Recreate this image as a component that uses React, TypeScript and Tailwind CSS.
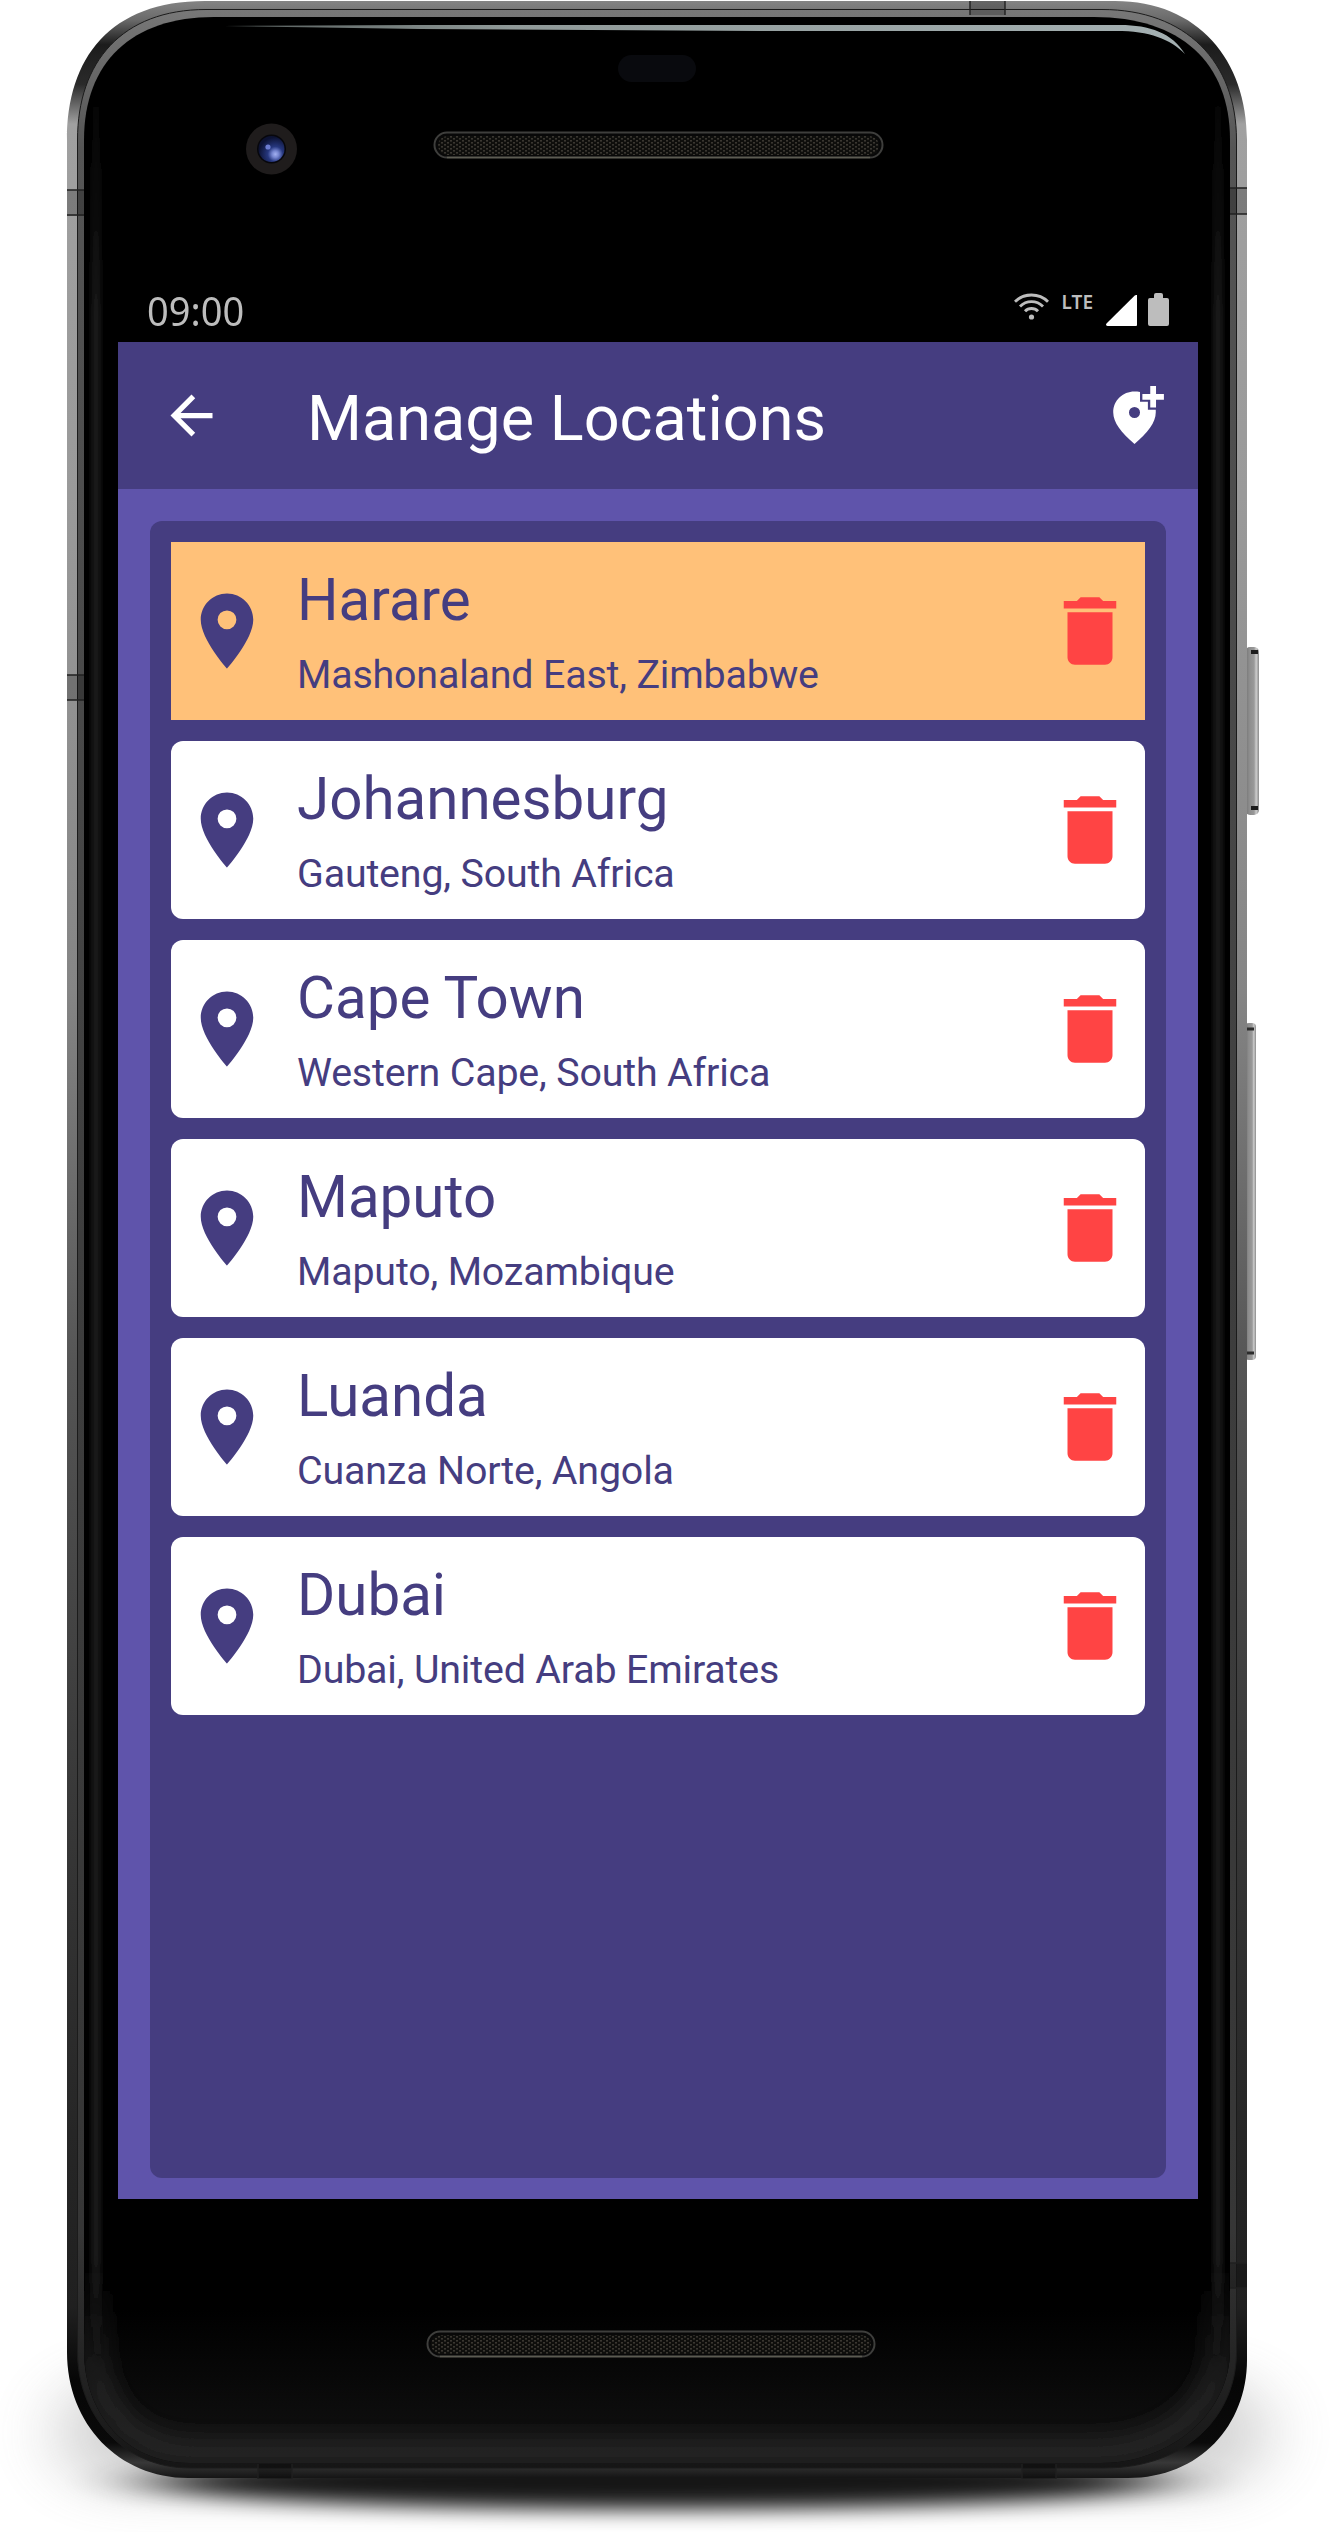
import React from "react";

const locations = [
  { city: "Harare", region: "Mashonaland East, Zimbabwe", selected: true },
  { city: "Johannesburg", region: "Gauteng, South Africa" },
  { city: "Cape Town", region: "Western Cape, South Africa" },
  { city: "Maputo", region: "Maputo, Mozambique" },
  { city: "Luanda", region: "Cuanza Norte, Angola" },
  { city: "Dubai", region: "Dubai, United Arab Emirates" },
];

/* Metal shell, glass, camera, speakers and side keys of the handset. */
function DeviceFrame() {
  return (
    <svg className="absolute inset-0" width="1330" height="2532" viewBox="0 0 1330 2532" aria-hidden="true">
      <defs>
        <linearGradient id="metal" x1="0" y1="0" x2="0" y2="2480" gradientUnits="userSpaceOnUse">
          <stop offset="0" stopColor="#858585" />
          <stop offset="0.008" stopColor="#6a6a6a" />
          <stop offset="0.018" stopColor="#1c1c1c" />
          <stop offset="0.034" stopColor="#2a2a2a" />
          <stop offset="0.05" stopColor="#a0a0a0" />
          <stop offset="0.2" stopColor="#9a9a9a" />
          <stop offset="0.4" stopColor="#858585" />
          <stop offset="0.55" stopColor="#555" />
          <stop offset="0.7" stopColor="#3c3c3c" />
          <stop offset="0.86" stopColor="#262626" />
          <stop offset="0.93" stopColor="#202020" />
          <stop offset="0.96" stopColor="#060606" />
          <stop offset="0.985" stopColor="#0a0a0a" />
          <stop offset="0.993" stopColor="#383838" />
          <stop offset="1" stopColor="#101010" />
        </linearGradient>
        <linearGradient id="rim" x1="0" y1="0" x2="0" y2="2480" gradientUnits="userSpaceOnUse">
          <stop offset="0" stopColor="#7a7a7a" />
          <stop offset="0.06" stopColor="#555" />
          <stop offset="0.5" stopColor="#3e3e3e" />
          <stop offset="0.9" stopColor="#363636" />
          <stop offset="1" stopColor="#141414" />
        </linearGradient>
        <linearGradient id="topShine" x1="220" x2="1190" y1="0" y2="0" gradientUnits="userSpaceOnUse">
          <stop offset="0" stopColor="#8c9896" stopOpacity="0.6" />
          <stop offset="0.3" stopColor="#8f9998" />
          <stop offset="1" stopColor="#a4b0b2" />
        </linearGradient>
        <linearGradient id="chin" x1="0" y1="2310" x2="0" y2="2463" gradientUnits="userSpaceOnUse">
          <stop offset="0" stopColor="#000" />
          <stop offset="1" stopColor="#121212" />
        </linearGradient>
        <linearGradient id="edgeFade" x1="0" y1="70" x2="0" y2="2370" gradientUnits="userSpaceOnUse">
          <stop offset="0" stopColor="#212121" stopOpacity="0" />
          <stop offset="0.11" stopColor="#212121" />
          <stop offset="0.95" stopColor="#212121" />
          <stop offset="1" stopColor="#212121" stopOpacity="0" />
        </linearGradient>
        <linearGradient id="keyMetal" x1="0" x2="1" y1="0" y2="0">
          <stop offset="0" stopColor="#6f6f6f" />
          <stop offset="0.3" stopColor="#8c8c8c" />
          <stop offset="0.65" stopColor="#999" />
          <stop offset="0.8" stopColor="#cdcdcd" />
          <stop offset="1" stopColor="#8a8a8a" />
        </linearGradient>
        <radialGradient id="lens" cx="0.65" cy="0.7" r="0.65">
          <stop offset="0" stopColor="#a2b0f0" />
          <stop offset="0.2" stopColor="#7585d0" />
          <stop offset="0.45" stopColor="#26377e" />
          <stop offset="1" stopColor="#0c1232" />
        </radialGradient>
        <pattern id="mesh" width="6" height="4" patternUnits="userSpaceOnUse">
          <rect width="6" height="4" fill="#0e0e0c" />
          <rect x="0" y="0" width="2" height="1.6" fill="#3a3731" />
          <rect x="3" y="2" width="2" height="1.6" fill="#3a3731" />
        </pattern>
        <filter id="soft" x="-20%" y="-100%" width="140%" height="300%">
          <feGaussianBlur stdDeviation="42 10" />
        </filter>
        <filter id="wide" x="-30%" y="-60%" width="160%" height="220%">
          <feGaussianBlur stdDeviation="34 24" />
        </filter>
        <filter id="edgeGlow" filterUnits="userSpaceOnUse" x="0" y="0" width="1330" height="2532">
          <feGaussianBlur stdDeviation="3" />
        </filter>
        <filter id="cornerGlow" filterUnits="userSpaceOnUse" x="0" y="2100" width="1330" height="432">
          <feGaussianBlur stdDeviation="13" />
        </filter>
        <linearGradient id="cornerFade" x1="0" y1="2260" x2="0" y2="2400" gradientUnits="userSpaceOnUse">
          <stop offset="0" stopColor="#2c2c2c" stopOpacity="0" />
          <stop offset="1" stopColor="#2c2c2c" />
        </linearGradient>
        <clipPath id="glassClip">
          <path d="M84 140 C84 62 132 17 214 17 H1094 C1180 17 1230 62 1230 140 V2350 C1230 2412 1172 2463 1100 2463 H190 C126 2463 84 2414 84 2350 Z" />
        </clipPath>
      </defs>

      <rect x="60" y="2375" width="1205" height="115" rx="60" fill="#777" opacity="0.32" filter="url(#wide)" />
      <ellipse cx="657" cy="2482" rx="510" ry="27" fill="#000" opacity="0.9" filter="url(#soft)" />

      {/* side keys */}
      <rect x="1245" y="647" width="14" height="168" rx="5" fill="url(#keyMetal)" />
      <path d="M1251 652 H1258 M1251 808 H1258" stroke="#1c1c1c" strokeWidth="4" />
      <rect x="1245" y="1023" width="11" height="337" rx="4" fill="url(#keyMetal)" />
      <path d="M1247 1029 H1254 M1247 1353 H1254" stroke="#2c2c2c" strokeWidth="3" />

      {/* shell */}
      <path
        d="M67 140 C67 58 110 1 205 1 H1115 C1198 1 1247 60 1247 140 V2360 C1247 2425 1200 2478 1128 2478 H190 C120 2479 67 2425 67 2352 Z"
        fill="url(#metal)"
      />
      <path
        d="M77.500 140 C77.500 62 122 9.500 206 9.500 H1102 C1186 9.500 1236.500 62 1236.500 140 V2352 C1236.500 2414 1188 2468 1104 2468 H190 C122 2468 77.500 2414 77.500 2352 Z"
        fill="url(#rim)"
        stroke="#1b1b1b"
        strokeWidth="1"
      />
      <path
        d="M84 140 C84 62 132 17 214 17 H1094 C1180 17 1230 62 1230 140 V2350 C1230 2412 1172 2463 1100 2463 H190 C126 2463 84 2414 84 2350 Z"
        fill="#000"
      />
      <g clipPath="url(#glassClip)">
        <rect x="84" y="2300" width="1146" height="163" fill="url(#chin)" />
        <path
          d="M94 2260 V2350 C94 2410 134 2452 194 2452 H1096 C1164 2452 1220 2410 1220 2350 V2260"
          fill="none"
          stroke="url(#cornerFade)"
          strokeWidth="22"
          filter="url(#cornerGlow)"
        />
        <g filter="url(#edgeGlow)" stroke="url(#edgeFade)" strokeWidth="7" fill="none">
          <path d="M96 70 V2300 Q96 2340 99 2370" />
          <path d="M1218 70 V2300 Q1218 2340 1215 2370" />
        </g>
      </g>
      <path d="M224 26 L420 25 H1120 C1150 25 1172 33 1185 54 C1170 39 1150 31 1116 31 H760 L420 29 Z" fill="url(#topShine)" />

      {/* antenna bands */}
      <path
        fill="#000"
        fillOpacity="0.22"
        d="M67 190 H84 V216 H67 Z M67 675 H84 V700 H67 Z M1230 188 H1247 V214 H1230 Z M1230 2263 H1247 V2288 H1230 Z M970 1 H1005 V15 H970 Z M258 2464 H292 V2479 H258 Z M1022 2464 H1056 V2479 H1022 Z"
      />
      <path
        stroke="#202020"
        strokeWidth="1.4"
        d="M67 190 H84 M67 215 H84 M67 675 H84 M67 700 H84 M1230 188 H1247 M1230 214 H1247 M1230 2263 H1247 M1230 2288 H1247 M970 1 V15 M1005 1 V15 M258 2464 V2479 M292 2464 V2479 M1022 2464 V2479 M1056 2464 V2479"
      />

      {/* camera, sensor, speakers */}
      <circle cx="271.5" cy="149" r="25.5" fill="#1f1c1c" />
      <circle cx="271.5" cy="149" r="14.5" fill="#07070c" />
      <circle cx="271.5" cy="149" r="13" fill="url(#lens)" />
      <circle cx="268" cy="147" r="2.6" fill="#6c7cd0" />
      <rect x="618" y="55" width="78" height="27" rx="13.5" fill="#090a0e" />
      <rect x="434.5" y="132.5" width="448" height="25" rx="12.5" fill="#080808" stroke="#3e3e3c" strokeWidth="2" />
      <rect x="438" y="136" width="441" height="19" rx="9.5" fill="url(#mesh)" />
      <path d="M447 157.5 H870" stroke="#5c5b52" strokeWidth="1.5" />
      <rect x="427.500" y="2331.500" width="447" height="25" rx="12.5" fill="#080808" stroke="#3e3e3c" strokeWidth="2" />
      <rect x="431" y="2335" width="440" height="19" rx="9.5" fill="url(#mesh)" />
      <path d="M440 2356.500 H862" stroke="#5c5b52" strokeWidth="1.5" />
    </svg>
  );
}

function WifiIcon() {
  return (
    <svg width="35" height="27" viewBox="0 0 35 27" fill="none" stroke="#bdbdbd" strokeWidth="2.9">
      <path d="M1 8.700 C10 -.3 25 -.3 34 8.700 M6 13.500 C12.500 7 22.500 7 29 13.500 M11 18.300 C14.500 14.500 20.500 14.500 24 18.300" />
      <circle cx="17.500" cy="24" r="2.6" fill="#bdbdbd" stroke="none" />
    </svg>
  );
}

function StatusBar() {
  return (
    <div className="flex h-[56px] items-start justify-between pl-[29px] pr-[29px] text-[#bdbdbd]">
      <span className="mt-[-2px] origin-left scale-x-[0.95] font-['Noto_Sans',sans-serif] text-[40px] leading-[54px]">09:00</span>
      <div className="flex items-start pt-[7px]">
        <WifiIcon />
        <span className="ml-[13px] font-['Noto_Sans',sans-serif] text-[19px] font-semibold leading-[18px]">LTE</span>
        <svg className="ml-[13px] mt-[2px]" width="31" height="31" viewBox="0 0 31 31" fill="#fff">
          <path d="M31 0 V30 Q31 31 30 31 H1.500 Q-.8 30.500 .5 28.500 L28.500 .8 Q30 -.3 31 0 Z" />
        </svg>
        <svg className="ml-[11px]" width="21" height="33" viewBox="0 0 21 33" fill="#bdbdbd">
          <path d="M6 2 Q6 0 8 0 H13 Q15 0 15 2 V5 H19 Q21 5 21 7 V31 Q21 33 19 33 H2 Q0 33 0 31 V7 Q0 5 2 5 H6 Z" />
        </svg>
      </div>
    </div>
  );
}

function Header() {
  return (
    <header className="flex h-[147px] items-center bg-[#453d80] text-white">
      <svg className="ml-[42px]" width="63" height="63" viewBox="0 0 24 24" fill="currentColor">
        <path d="M20 11H7.830l5.590-5.590L12 4l-8 8 8 8 1.410-1.410L7.830 13H20v-2z" />
      </svg>
      <h1 className="ml-[84px] mt-[6px] whitespace-nowrap text-[63px] font-normal leading-[76px]">Manage Locations</h1>
      <svg className="ml-auto mr-[32px] mt-[3px] shrink-0" width="63" height="63" viewBox="0 0 24 24" fill="currentColor">
        <path fillRule="evenodd" d="M12 2.100C12.700 2.100 13.400 2.100 14.100 2.300V6h3v3h3v1.050c0 3.800-3.100 7.700-8.100 12C7 17.750 3.900 13.850 3.900 10.050 3.900 5.550 7.500 2.100 12 2.100zM12 8a2.100 2.100 0 1 0 0 4.200A2.100 2.100 0 0 0 12 8z" />
        <path d="M18 0h2.200v3H23.200v2.200h-3v3H18v-3h-3V3h3z" />
      </svg>
    </header>
  );
}

function LocationCard({ city, region, selected }: { city: string; region: string; selected?: boolean }) {
  return (
    <li className={selected ? "flex h-[178px] items-center bg-[#ffc179]" : "flex h-[178px] items-center rounded-xl bg-white"}>
      <svg className="ml-[10.5px] shrink-0" width="90" height="90" viewBox="0 0 24 24" fill="#453d80">
        <path d="M12 2C8.130 2 5 5.130 5 9c0 5.250 7 13 7 13s7-7.750 7-13c0-3.870-3.130-7-7-7zm0 9.500a2.500 2.500 0 0 1 0-5 2.500 2.500 0 0 1 0 5z" />
      </svg>
      <div className="ml-[25.5px] flex flex-col gap-4 pt-0.5 text-[#453d80]">
        <span className="text-[58.3px] leading-[70px]">{city}</span>
        <span className="text-[39.375px] leading-[48px] tracking-[-0.17px]">{region}</span>
      </div>
      <svg className="ml-auto mr-[10.5px] shrink-0" width="90" height="90" viewBox="0 0 24 24" fill="#ff4444">
        <path d="M6 19c0 1.100.9 2 2 2h8c1.100 0 2-.9 2-2V7H6v12zM19 4h-3.500l-1-1h-5l-1 1H5v2h14V4z" />
      </svg>
    </li>
  );
}

export default function App() {
  return (
    <div className="relative h-[2532px] w-[1330px] overflow-hidden bg-white font-[Roboto,sans-serif]">
      <DeviceFrame />
      <div className="relative ml-[118px] flex w-[1080px] flex-col pt-[286px]">
        <StatusBar />
        <Header />
        <main className="h-[1710px] bg-[#5f54ab] px-8 pb-[21px] pt-8">
          <ul className="flex h-[1657px] flex-col gap-[21px] rounded-xl bg-[#453d80] p-[21px]">
            {locations.map((item) => (
              <LocationCard key={item.city} {...item} />
            ))}
          </ul>
        </main>
      </div>
    </div>
  );
}
